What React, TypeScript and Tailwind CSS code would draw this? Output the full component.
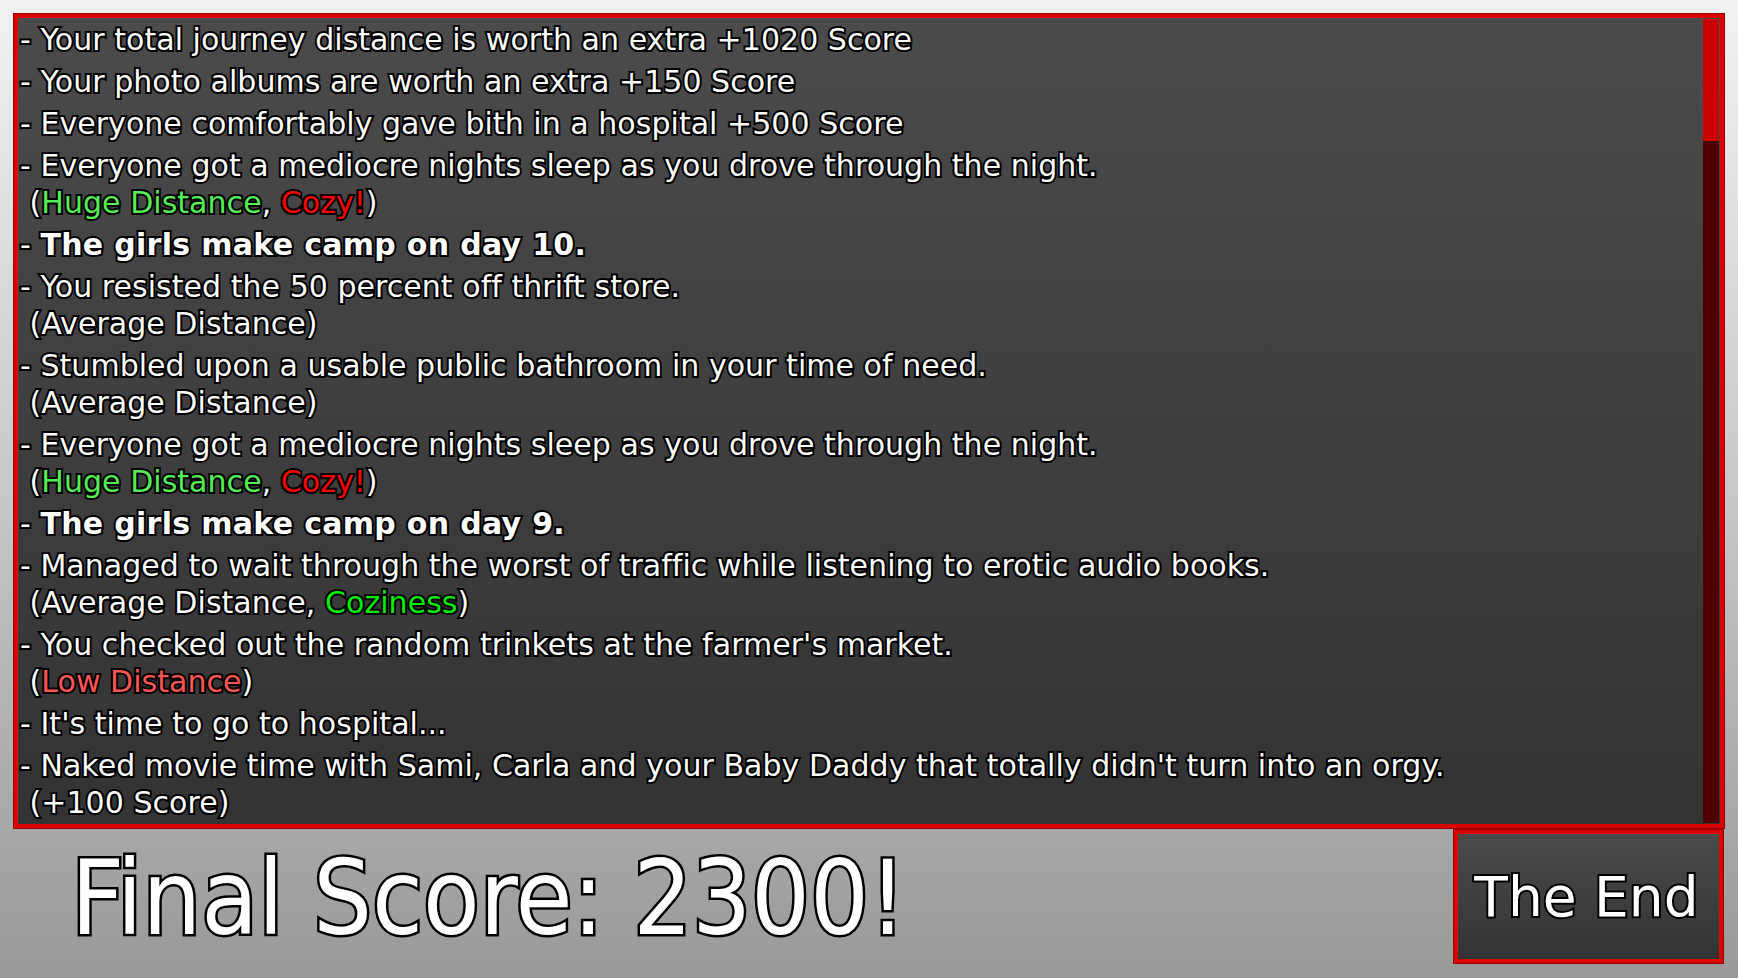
import React from "react";

type Seg = { t: string; c?: string };
type Entry = { main: string; bold?: boolean; sub?: Seg[] };

const G = "text-[#55ee55]";
const R = "text-[#ff0000]";
const G2 = "text-[#00ee00]";
const R2 = "text-[#ff5555]";

const entries: Entry[] = [
  { main: "- Your total journey distance is worth an extra +1020 Score" },
  { main: "- Your photo albums are worth an extra +150 Score" },
  { main: "- Everyone comfortably gave bith in a hospital +500 Score" },
  {
    main: "- Everyone got a mediocre nights sleep as you drove through the night.",
    sub: [{ t: " (" }, { t: "Huge Distance", c: G }, { t: ", " }, { t: "Cozy!", c: R }, { t: ")" }],
  },
  { main: "The girls make camp on day 10.", bold: true },
  {
    main: "- You resisted the 50 percent off thrift store.",
    sub: [{ t: " (Average Distance)" }],
  },
  {
    main: "- Stumbled upon a usable public bathroom in your time of need.",
    sub: [{ t: " (Average Distance)" }],
  },
  {
    main: "- Everyone got a mediocre nights sleep as you drove through the night.",
    sub: [{ t: " (" }, { t: "Huge Distance", c: G }, { t: ", " }, { t: "Cozy!", c: R }, { t: ")" }],
  },
  { main: "The girls make camp on day 9.", bold: true },
  {
    main: "- Managed to wait through the worst of traffic while listening to erotic audio books.",
    sub: [{ t: " (Average Distance, " }, { t: "Coziness", c: G2 }, { t: ")" }],
  },
  {
    main: "- You checked out the random trinkets at the farmer's market.",
    sub: [{ t: " (" }, { t: "Low Distance", c: R2 }, { t: ")" }],
  },
  { main: "- It's time to go to hospital..." },
  {
    main: "- Naked movie time with Sami, Carla and your Baby Daddy that totally didn't turn into an orgy.",
    sub: [{ t: " (+100 Score)" }],
  },
];

const outline =
  "[paint-order:stroke_fill] [-webkit-text-stroke:4px_#000] [font-family:'DejaVu_Sans',sans-serif]";

export default function App() {
  return (
    <div className="w-[1738px] h-[978px] overflow-hidden bg-linear-to-b from-[#f2f2f2] via-[#c8c8c8] to-[#999999] flex flex-col">
      <div className="mt-[14px] ml-[14px] mr-[14px] h-[814px] border-[4px] border-[#dd0000] shadow-[0_0_0_1px_#9a0000] bg-linear-to-b from-[#4b4b4b] to-[#333333] flex flex-row overflow-hidden">
        <div className={`flex-1 pl-[2px] pt-[3px] flex flex-col gap-[5px] text-white text-[30px] leading-[37px] whitespace-pre tracking-[0.04px] ${outline}`}>
          {entries.map((e, i) => (
            <div key={i}>
              {e.bold ? (
                <div>
                  - <span className="font-bold tracking-[0.3px]">{e.main}</span>
                </div>
              ) : (
                <div>{e.main}</div>
              )}
              {e.sub && (
                <div>
                  {e.sub.map((s, j) => (
                    <span key={j} className={s.c ?? ""}>
                      {s.t}
                    </span>
                  ))}
                </div>
              )}
            </div>
          ))}
        </div>
        <div className="w-[16px] my-[1px] mr-[1px] flex flex-col">
          <div className="h-[122px] bg-[#cc0000]" />
          <div className="flex-1 bg-[#500000]" />
        </div>
      </div>
      <div className="flex flex-row items-center mt-[2px] ml-[71px] mr-[15px] h-[133px]">
        <div
          className="flex-1 text-white text-[103px] leading-none [paint-order:stroke_fill] [-webkit-text-stroke:5px_#000] [font-family:'DejaVu_Sans_Condensed','DejaVu_Sans',sans-serif] [font-stretch:condensed] pt-[4px]"
        >
          Final Score: 2300!
        </div>
        <div className="w-[269px] h-[133px] border-[4px] border-[#dd0000] shadow-[0_0_0_1px_#9a0000] bg-linear-to-b from-[#4b4b4b] to-[#333333] flex items-center justify-center">
          <span className={`text-white text-[55px] leading-none ${outline} pt-[1px] pr-[4px]`}>The End</span>
        </div>
      </div>
    </div>
  );
}
